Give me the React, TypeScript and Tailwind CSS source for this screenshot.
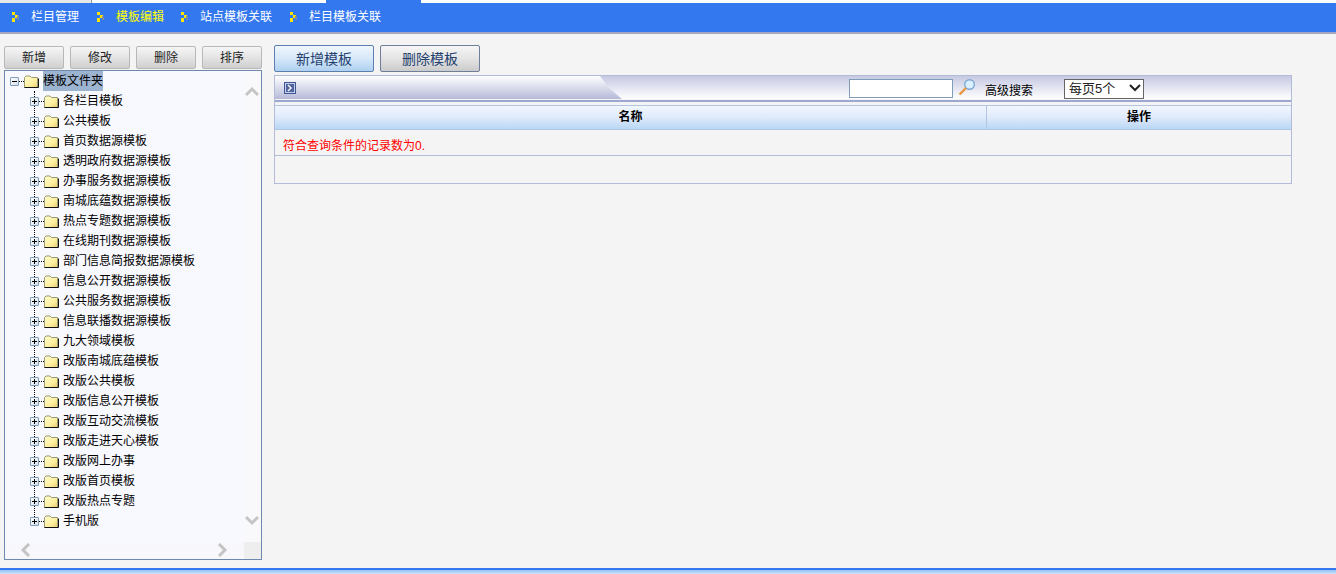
const navItems = ["栏目管理", "模板编辑", "站点模板关联", "栏目模板关联"];

const folders = [
  "各栏目模板",
  "公共模板",
  "首页数据源模板",
  "透明政府数据源模板",
  "办事服务数据源模板",
  "南城底蕴数据源模板",
  "热点专题数据源模板",
  "在线期刊数据源模板",
  "部门信息简报数据源模板",
  "信息公开数据源模板",
  "公共服务数据源模板",
  "信息联播数据源模板",
  "九大领域模板",
  "改版南城底蕴模板",
  "改版公共模板",
  "改版信息公开模板",
  "改版互动交流模板",
  "改版走进天心模板",
  "改版网上办事",
  "改版首页模板",
  "改版热点专题",
  "手机版",
];

function NavArrow() {
  return (
    <svg width="8" height="10" viewBox="0 0 8 10" className="shrink-0 mt-[-1px]">
      <rect x="0" y="0" width="3" height="3" fill="#ffe600" />
      <rect x="3" y="3" width="3" height="3" fill="#ffe600" />
      <rect x="0" y="6" width="3" height="4" fill="#ffe600" />
      <rect x="5" y="4" width="2" height="4" fill="#7f8a9c" />
    </svg>
  );
}

function Folder() {
  return (
    <svg width="15" height="13" viewBox="0 0 15 13" className="shrink-0">
      <defs>
        <linearGradient id="folderFill" x1="0" y1="0" x2="1" y2="1">
          <stop offset="0" stopColor="#fffbd0" />
          <stop offset="0.6" stopColor="#fff0a0" />
          <stop offset="1" stopColor="#e8cc70" />
        </linearGradient>
      </defs>
      <path d="M0.5 12.5V2.5L2 1H6L7.5 2.5H13.5V12.5Z" fill="url(#folderFill)" stroke="#9a9a70" />
      <path d="M0.5 12.5H14.5V3.5" fill="none" stroke="#111" />
    </svg>
  );
}

function ExpandBox({ open }: { open?: boolean }) {
  return (
    <span className="relative block w-[9px] h-[9px] shrink-0 border border-[#7f9db9] rounded-[1px] bg-gradient-to-br from-white to-[#d5dfe8]">
      <span className="absolute left-[1px] top-[3px] w-[5px] h-[1px] bg-black" />
      {!open && <span className="absolute left-[3px] top-[1px] w-[1px] h-[5px] bg-black" />}
    </span>
  );
}

function Chevron({ dir, className }: { dir: "up" | "down" | "left" | "right"; className: string }) {
  const points = {
    up: "1,9 7,3 13,9",
    down: "1,3 7,9 13,3",
    left: "9,1 3,7 9,13",
    right: "3,1 9,7 3,13",
  }[dir];
  return (
    <svg width="14" height="14" viewBox="0 0 14 14" className={className}>
      <polyline points={points} fill="none" stroke="#c4c4c4" strokeWidth="3" />
    </svg>
  );
}

function SmallButton({ label }: { label: string }) {
  return (
    <button className="w-[60px] h-[23px] text-[12px] text-[#222] border border-[#b8b8b8] rounded-[2px] bg-gradient-to-b from-[#f6f6f6] via-[#e4e4e4] to-[#cfcfcf]">
      {label}
    </button>
  );
}

function Tree() {
  return (
    <div className="relative h-[490px] border border-[#6f88b0] bg-[#f8f8ff] overflow-hidden">
      <div className="flex items-center h-[20px] pl-[5px]">
        <ExpandBox open />
        <span className="w-[5px] border-t border-dotted border-black" />
        <Folder />
        <span className="ml-[4px] w-[60px] h-[20px] leading-[20px] bg-[#9db4d0] text-[12px] text-black">模板文件夹</span>
      </div>
      <div className="absolute left-[29px] top-[20px] h-[430px] border-l border-dotted border-black" />
      <ul>
        {folders.map((name) => (
          <li key={name} className="relative flex items-center h-[20px] pl-[25px]">
            <ExpandBox />
            <span className="w-[5px] border-t border-dotted border-black" />
            <Folder />
            <span className="ml-[4px] text-[12px] text-black whitespace-nowrap">{name}</span>
          </li>
        ))}
      </ul>
      {/* scrollbars */}
      <div className="absolute right-0 top-0 bottom-[17px] w-[17px] bg-[#f9f9fb]">
        <Chevron dir="up" className="absolute left-[1px] top-[15px]" />
        <Chevron dir="down" className="absolute left-[1px] bottom-[14px]" />
      </div>
      <div className="absolute left-0 right-[17px] bottom-0 h-[17px] bg-[#f8f8fc]">
        <Chevron dir="left" className="absolute left-[15px] top-[1px]" />
        <Chevron dir="right" className="absolute right-[14px] top-[1px]" />
      </div>
      <div className="absolute right-0 bottom-0 w-[17px] h-[17px] bg-[#eeeeee]" />
    </div>
  );
}

function Toolbar() {
  return (
    <div className="relative h-[23px] flex items-center bg-gradient-to-b from-[#c6c9e2] to-white">
      <div className="absolute left-0 top-0 bottom-0 w-[347px] bg-gradient-to-b from-white to-[#b6bad8] [clip-path:polygon(0_0,325px_0,334px_12px,347px_23px,0_23px)]" />
      <span className="relative ml-[9px] w-[12px] h-[12px] flex items-center justify-center border border-[#3f5596] bg-[#4f64a0] shadow-[inset_0_0_0_1px_#c4cee6]">
        <svg width="6" height="8" viewBox="0 0 6 8">
          <polyline points="1,1 4,4 1,7" fill="none" stroke="#fff" strokeWidth="1.4" />
        </svg>
      </span>
      <input className="absolute left-[574px] top-[3px] w-[104px] h-[19px] border border-[#7f9db9] bg-white" />
      <svg width="18" height="18" viewBox="0 0 18 18" className="absolute left-[683px] top-[3px]">
        <circle cx="11.5" cy="5.5" r="4.8" fill="#d8f0ff" stroke="#7fa8d0" strokeWidth="1.4" />
        <line x1="8" y1="9" x2="1.5" y2="15.5" stroke="#e8963c" strokeWidth="2.4" />
      </svg>
      <span className="absolute left-[710px] top-[7px] text-[12px] leading-[16px] text-black">高级搜索</span>
      <div className="absolute left-[789px] top-[3px] w-[80px] h-[20px]">
        <select className="block w-full h-full appearance-none border border-[#666] bg-white text-[13px] leading-[18px] text-[#222] pl-[4px]">
          <option>每页5个</option>
        </select>
        <svg width="12" height="8" viewBox="0 0 12 8" className="absolute left-[65px] top-[5px] pointer-events-none">
          <polyline points="1,1 6,6 11,1" fill="none" stroke="#222" strokeWidth="2" />
        </svg>
      </div>
    </div>
  );
}

export default function App() {
  return (
    <div className="relative flex flex-col w-[1336px] h-[574px] overflow-hidden bg-[#f4f4f4] font-['Liberation_Sans','Noto_Sans_CJK_SC',sans-serif]">
      <div className="flex h-[3px] bg-white shrink-0">
        <div className="w-[92px] bg-[#e8e8e8] border-r border-[#999]" />
        <div className="ml-[234px] w-[95px] bg-[#3478f0]" />
      </div>

      <div className="flex items-center shrink-0 h-[31px] pl-[12px] pb-[1px] bg-[#3478f0] border-b-2 border-[#a7a7c4]">
        {navItems.map((item, i) => (
          <div key={item} className={`flex items-center ${i === 1 ? "mr-[17px]" : "mr-[18px]"}`}>
            <NavArrow />
            <span className={`ml-[11px] text-[12px] ${i === 1 ? "text-[#ffff00]" : "text-white"}`}>{item}</span>
          </div>
        ))}
      </div>

      <div className="flex flex-1 pt-[11px] pl-[4px]">
        <div className="w-[258px] shrink-0">
          <div className="flex justify-between mt-[1px] mb-[1px]">
            {["新增", "修改", "删除", "排序"].map((b) => (
              <SmallButton key={b} label={b} />
            ))}
          </div>
          <Tree />
        </div>

        <div className="ml-[12px] w-[1018px]">
          <div className="flex gap-[6px]">
            <button className="w-[100px] h-[27px] pt-[2px] text-[14px] text-[#24406e] border border-[#5d7fb0] rounded-[2px] bg-gradient-to-b from-[#f0f6fd] via-[#d6e8f9] to-[#aed0f0]">
              新增模板
            </button>
            <button className="w-[100px] h-[27px] pt-[2px] text-[14px] text-[#24406e] border border-[#6d7f99] rounded-[2px] bg-gradient-to-b from-[#f6f6f6] via-[#e4e4e4] to-[#cbcbcb]">
              删除模板
            </button>
          </div>

          <div className="mt-[3px] h-[109px] border border-[#b2bcd8]">
            <Toolbar />
            <div className="h-[2px] mt-[1px] bg-[#9ca8d0]" />
            <div className="flex h-[25px] mt-[3px] pb-[2px] border-y border-[#b2c6e4] bg-gradient-to-b from-[#f2f7fe] via-[#dfeafb] to-[#b9d7f5] text-[12px] font-bold text-black">
              <div className="w-[712px] flex items-center justify-center border-r border-[#b2c6e4] mb-[-2px] pb-[2px]">名称</div>
              <div className="flex-1 flex items-center justify-center">操作</div>
            </div>
            <div className="flex items-center h-[26px] pl-[8px] pt-[7px] border-b border-[#b2bcd8] text-[12px] text-[#ff0000]">
              符合查询条件的记录数为0.
            </div>
          </div>
        </div>
      </div>

      <div className="h-[6px] shrink-0 border-t-2 border-[#3478f0] bg-gradient-to-b from-[#8fc0f4] to-[#cfe3f8]" />
    </div>
  );
}
